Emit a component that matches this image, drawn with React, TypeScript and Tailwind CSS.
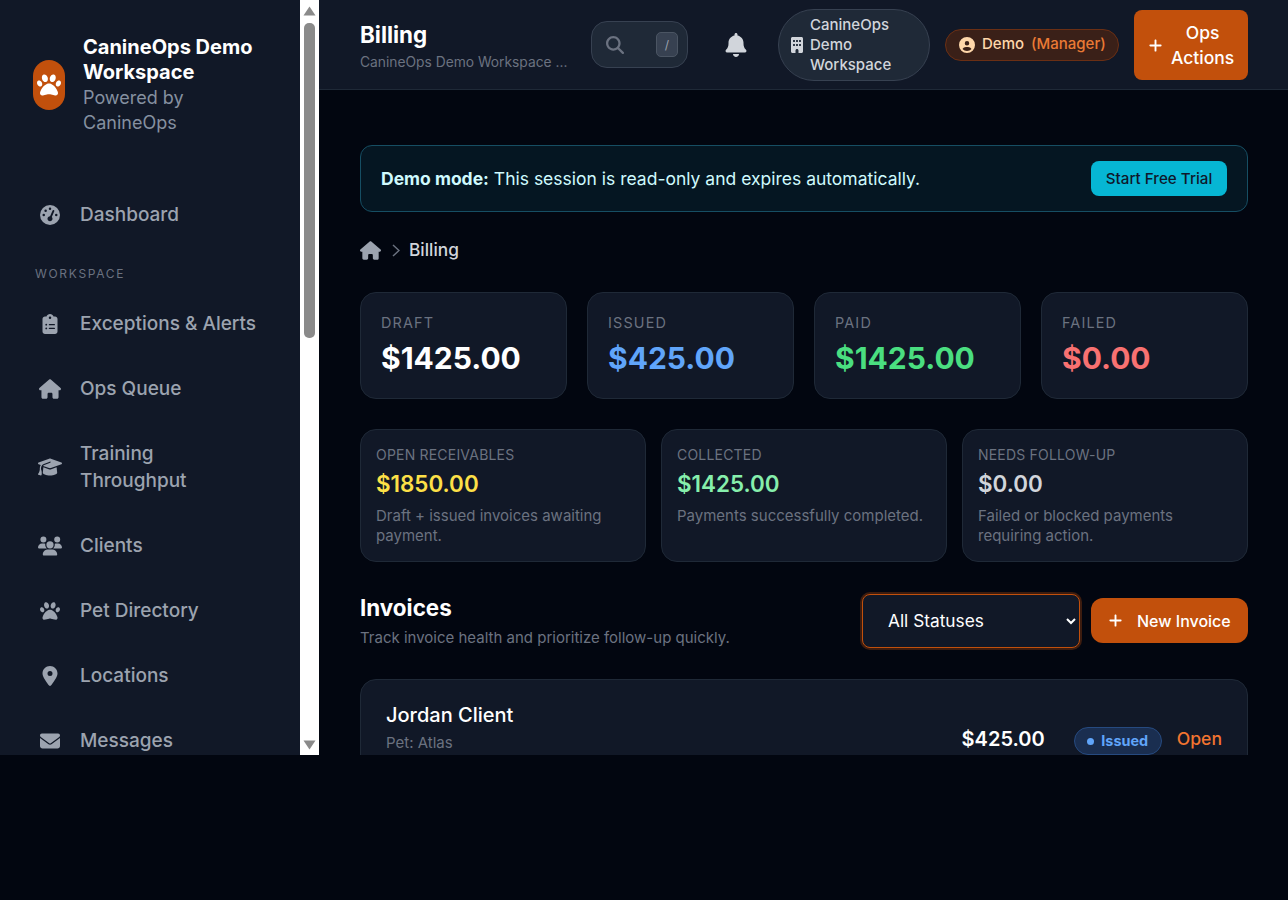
import type { ReactNode } from "react";
import {
  FaBell,
  FaBuilding,
  FaCircleUser,
  FaClipboardList,
  FaEnvelope,
  FaGaugeHigh,
  FaGraduationCap,
  FaHouse,
  FaLocationDot,
  FaMagnifyingGlass,
  FaPaw,
  FaPlus,
  FaUsers,
} from "react-icons/fa6";

const NavItem = ({ icon, label, className = "" }: { icon: ReactNode; label: ReactNode; className?: string }) => (
  <div className={`flex items-center gap-[18px] px-[38px] text-[19px] font-medium text-[#9ca3af] ${className}`}>
    <span className="flex w-6 shrink-0 justify-center text-[#9ca3af]">{icon}</span>
    <span>{label}</span>
  </div>
);

const statCards = [
  { label: "Draft", value: "$1425.00", color: "text-white" },
  { label: "Issued", value: "$425.00", color: "text-[#60a5fa]" },
  { label: "Paid", value: "$1425.00", color: "text-[#4ade80]" },
  { label: "Failed", value: "$0.00", color: "text-[#f87171]" },
];

const summaryCards = [
  { label: "Open Receivables", value: "$1850.00", color: "text-[#fde047]", text: "Draft + issued invoices awaiting payment." },
  { label: "Collected", value: "$1425.00", color: "text-[#86efac]", text: "Payments successfully completed." },
  { label: "Needs Follow-up", value: "$0.00", color: "text-[#d1d5db]", text: "Failed or blocked payments requiring action." },
];

const Sidebar = () => (
  <aside className="flex h-full w-[319px] shrink-0">
    <div className="h-full w-[300px] overflow-hidden bg-[#111827]">
      <div className="flex items-center gap-[18px] pt-[35px] pl-[33px]">
        <div className="flex h-[50px] w-8 shrink-0 items-center justify-center rounded-full bg-[#c2500c] text-white">
          <FaPaw size={24} />
        </div>
        <div className="w-[190px]">
          <div className="text-[20px] leading-[25px] font-bold text-white">CanineOps Demo Workspace</div>
          <div className="text-[18px] leading-[25px] text-[#8590a0]">Powered by CanineOps</div>
        </div>
      </div>
      <NavItem className="mt-[66px] leading-[28px]" icon={<FaGaugeHigh size={20} />} label="Dashboard" />
      <div className="mt-[37px] pl-[35px] text-[12px] leading-4 tracking-[0.14em] text-[#6b7280]">WORKSPACE</div>
      <NavItem className="mt-[28px] leading-[28px]" icon={<FaClipboardList size={20} />} label="Exceptions &amp; Alerts" />
      <NavItem className="mt-[37px] leading-[28px]" icon={<FaHouse size={22} />} label="Ops Queue" />
      <NavItem className="mt-[37px] leading-[27px]" icon={<FaGraduationCap size={24} />} label="Training Throughput" />
      <NavItem className="mt-[38px] leading-[28px]" icon={<FaUsers size={24} />} label="Clients" />
      <NavItem className="mt-[37px] leading-[28px]" icon={<FaPaw size={20} />} label="Pet Directory" />
      <NavItem className="mt-[37px] leading-[28px]" icon={<FaLocationDot size={20} />} label="Locations" />
      <NavItem className="mt-[37px] leading-[28px]" icon={<FaEnvelope size={20} />} label="Messages" />
    </div>
    <div className="flex h-full w-[19px] shrink-0 flex-col items-center bg-white pt-[6px] pb-[5px]">
      <svg width="13" height="10" viewBox="0 0 13 10" className="shrink-0">
        <path d="M6.5 0.5 L12.5 9.5 L0.5 9.5 Z" fill="#8a8a8a" />
      </svg>
      <div className="mt-[7px] h-[315px] w-[11px] rounded-[5px] bg-[#8a8a8a]" />
      <svg width="13" height="10" viewBox="0 0 13 10" className="mt-auto shrink-0">
        <path d="M0.5 0.5 L12.5 0.5 L6.5 9.5 Z" fill="#8a8a8a" />
      </svg>
    </div>
  </aside>
);

const Header = () => (
  <header className="flex h-[90px] items-center border-b border-[#1f2937] bg-[#111827] pr-[40px] pl-[41px]">
    <div className="w-[207px] pt-[3px]">
      <div className="text-[22.4px] leading-[30px] font-bold text-white">Billing</div>
      <div className="mt-[2px] text-[13.8px] leading-5 whitespace-nowrap text-[#6b7280]">CanineOps Demo Workspace ...</div>
    </div>
    <div className="ml-6 flex h-[47px] w-[97px] items-center justify-between rounded-2xl border border-[#374151] bg-[#1f2937] pr-[9px] pl-[14px]">
      <FaMagnifyingGlass size={18} className="text-[#6b7280]" />
      <span className="flex h-[25px] w-[22px] items-center justify-center rounded-[5px] border border-[#4b5563] bg-[#374151] text-[12px] text-[#9ca3af]">/</span>
    </div>
    <FaBell size={24} className="ml-[36px] text-[#d1d5db]" />
    <div className="ml-[30px] flex h-[72px] w-[152px] items-center gap-[5px] rounded-full border border-[#374151] bg-[#1f2937] pl-[10px]">
      <FaBuilding size={16} className="shrink-0 text-[#d1d5db]" />
      <span className="text-[15px] leading-5 font-medium text-[#d1d5db]">CanineOps Demo Workspace</span>
    </div>
    <div className="ml-[15px] flex h-8 w-[174px] items-center gap-[7px] rounded-full border border-[#6b2f14] bg-[#3a2018] pl-[13px] text-[15px] font-medium">
      <FaCircleUser size={16} className="text-[#fed7aa]" />
      <span className="text-[#fed7aa]">Demo</span>
      <span className="text-[#ea7a35]">(Manager)</span>
    </div>
    <button className="ml-[15px] flex h-[70px] w-[114px] items-center gap-2 rounded-lg bg-[#c2500c] pt-[1px] pr-[15px] pl-[14px] text-[17.5px] leading-[25px] font-medium text-white">
      <FaPlus size={15} className="shrink-0" />
      <span className="flex-1 text-center">Ops Actions</span>
    </button>
  </header>
);

const App = () => (
  <div className="h-[900px] bg-[#020610] font-['Inter',sans-serif]">
    <div className="flex h-[755px] overflow-hidden">
      <Sidebar />
      <main className="min-w-0 flex-1 overflow-hidden">
        <Header />
        <div className="px-[40px] pt-[55px] pl-[41px]">
          <div className="flex h-[67px] items-center justify-between rounded-xl border border-[#164e63] bg-[#051622] pr-[20px] pl-[20px]">
            <p className="pt-[1px] text-[17.5px] text-[#cffafe]">
              <strong className="font-bold">Demo mode:</strong> This session is read-only and expires automatically.
            </p>
            <button className="h-[35px] w-[136px] rounded-lg bg-[#06b6d4] pt-[1px] text-[15.2px] font-medium text-[#0f172a]">Start Free Trial</button>
          </div>

          <div className="mt-[26px] flex h-[24px] items-center">
            <FaHouse size={21} className="text-[#9ca3af]" />
            <svg width="8" height="13" viewBox="0 0 8 13" className="ml-[11px] shrink-0" fill="none">
              <path d="M1 1 L7 6.5 L1 12" stroke="#6b7280" strokeWidth="1.5" />
            </svg>
            <span className="ml-[9px] text-[17.3px] font-medium text-[#d1d5db]">Billing</span>
          </div>

          <div className="mt-[30px] grid grid-cols-4 gap-5">
            {statCards.map((c) => (
              <div key={c.label} className="h-[107px] rounded-2xl border border-[#1f2937] bg-[#111827] px-5 pt-[20px]">
                <div className="text-[14.4px] leading-5 tracking-[0.08em] text-[#6b7280] uppercase">{c.label}</div>
                <div className={`mt-[7px] text-[30px] leading-[36px] font-bold ${c.color}`}>{c.value}</div>
              </div>
            ))}
          </div>

          <div className="mt-[30px] grid grid-cols-3 gap-[15px]">
            {summaryCards.map((c) => (
              <div key={c.label} className="h-[133px] rounded-2xl border border-[#1f2937] bg-[#111827] px-[15px] pt-[15px]">
                <div className="text-[14px] leading-5 tracking-[0.2px] text-[#6b7280] uppercase">{c.label}</div>
                <div className={`mt-[5px] text-[22.4px] leading-[28px] font-semibold ${c.color}`}>{c.value}</div>
                <div className="mt-[8px] text-[15px] leading-5 text-[#6b7280]">{c.text}</div>
              </div>
            ))}
          </div>

          <div className="mt-[31px] flex items-center justify-between">
            <div className="pt-[1px]">
              <h2 className="text-[22.4px] leading-7 font-bold text-white">Invoices</h2>
              <p className="mt-[6px] text-[15px] leading-5 text-[#6b7280]">Track invoice health and prioritize follow-up quickly.</p>
            </div>
            <div className="flex items-center gap-[11px]">
              <select className="mt-[1px] h-[54px] w-[218px] rounded-lg border border-[#c2500c] bg-[#111827] pb-[2px] pl-[21px] text-[17.3px] text-white shadow-[0_0_0_2px_rgba(194,80,12,0.3)] outline-none">
                <option>All Statuses</option>
              </select>
              <button className="flex h-[45px] w-[157px] items-center gap-[14px] rounded-xl bg-[#c2500c] pl-[17px] text-[16px] font-medium text-white">
                <FaPlus size={15} />
                New Invoice
              </button>
            </div>
          </div>

          <div className="mt-[31px] flex h-[120px] items-start justify-between rounded-2xl border border-[#1f2937] bg-[#111827] pt-[21px] pr-[25px] pl-[25px]">
            <div>
              <div className="text-[20px] leading-7 font-medium text-white">Jordan Client</div>
              <div className="mt-[4px] text-[15px] leading-5 text-[#6b7280]">Pet: Atlas</div>
            </div>
            <div className="mt-[22px] flex items-center">
              <span className="text-[20px] font-semibold text-white">$425.00</span>
              <span className="mt-[4px] ml-[29px] flex h-[28px] w-[88px] items-center justify-center gap-[7px] rounded-full border border-[#264a80] bg-[#1a2e50] text-[14.4px] font-bold text-[#60a5fa]">
                <span className="h-[7px] w-[7px] rounded-full bg-[#60a5fa]" />
                Issued
              </span>
              <span className="ml-[15px] text-[17.6px] font-medium text-[#f27430]">Open</span>
            </div>
          </div>
        </div>
      </main>
    </div>
  </div>
);

export default App;
